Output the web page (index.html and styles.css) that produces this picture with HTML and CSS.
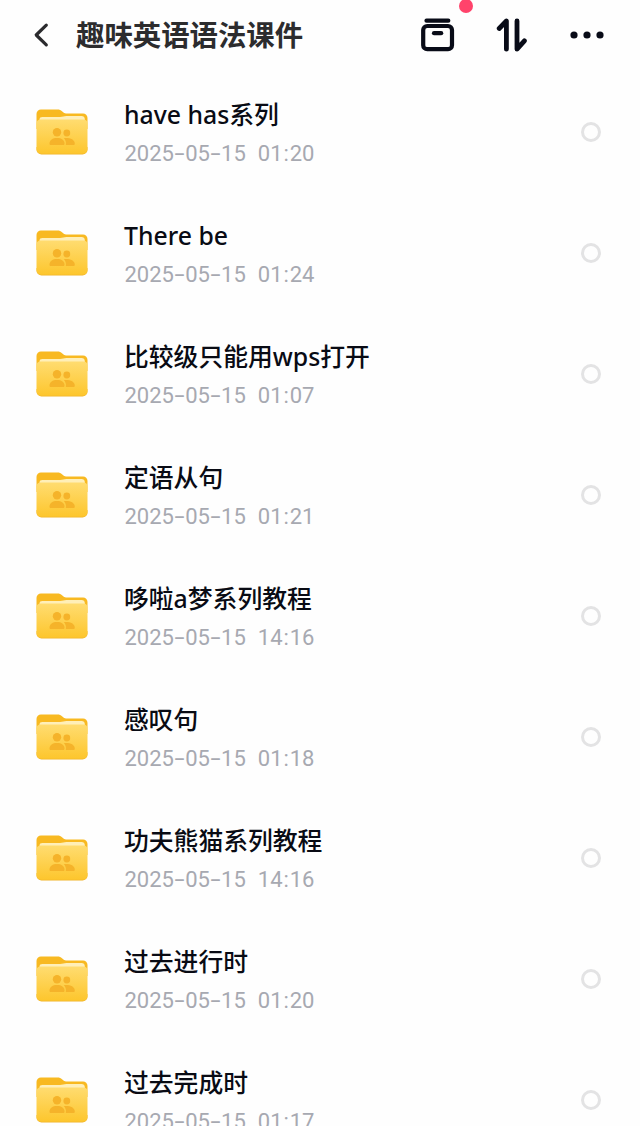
FILE: index.html
```html
<!DOCTYPE html>
<html lang="zh-CN">
<head>
<meta charset="utf-8">
<title>趣味英语语法课件</title>
<link rel="stylesheet" href="styles.css">
</head>
<body>
<svg class="defs" aria-hidden="true">
  <defs>
    <linearGradient id="front" x1="0" y1="0" x2="0" y2="1">
      <stop offset="0" stop-color="#ffdc70"/>
      <stop offset="1" stop-color="#fdc62d"/>
    </linearGradient>
    <symbol id="folder" viewBox="0 0 52 46">
      <path fill="#f8b921" d="M.5 5A4.500 4.500 0 0 1 5 .5h16.500c2 0 3.200.6 4.500 1.800l1.500 1.200c1 .8 2 1 3.500 1h16a4.500 4.500 0 0 1 4.500 4.500V20H.5z"/>
      <path fill="#ffefb8" d="M3.500 14V10.500C3.500 8.800 4.500 8 6.500 8H24c1.400 0 2.300-.2 3.300-.5.900-.3 1.800-.5 3.200-.5h15c2 0 3.300 1.200 3.300 3V14z"/>
      <path fill="#f0b32b" d="M.5 38h51v2.500a5 5 0 0 1-5 5h-41a5 5 0 0 1-5-5z"/>
      <path fill="url(#front)" d="M.5 14.500c0-2.500 1.700-4 4.300-4h42.400c2.600 0 4.300 1.500 4.300 4V40c0 3-2 4.700-5 4.700h-41c-3 0-5-1.700-5-4.700z"/>
      <g fill="#f5b32a">
        <circle cx="21" cy="23.200" r="4.200"/>
        <circle cx="30.800" cy="24" r="3.400"/>
        <path d="M13.500 34.700c0-3.800 3.200-5.700 7.500-5.700s7.500 1.900 7.500 5.700c0 .8-.5 1.300-1.300 1.300H14.800c-.8 0-1.300-.5-1.300-1.300z"/>
        <path d="M27.800 29.200c5-.8 11 .8 11 5.500 0 .8-.5 1.300-1.300 1.300h-7.700c.5-2.800-.2-5.200-2-6.800z"/>
      </g>
    </symbol>
  </defs>
</svg>

<header class="bar">
  <svg class="back" viewBox="0 0 16 26"><path d="M13.300 3.200 3.200 13l10.100 9.800"/></svg>
  <h1 class="heading">趣味英语语法课件</h1>
  <div class="actions">
    <div class="action">
      <svg class="glyph" viewBox="0 0 36 36"><path d="M6.500 3.700h21.800"/><rect x="3.200" y="9" width="28.800" height="23.200" rx="4"/><path d="M14 16.200h7.200"/></svg>
      <span class="badge"></span>
    </div>
    <svg class="glyph sort" viewBox="0 0 36 36"><path d="M4.200 11.500 11.400 4v28.200M22 4v28.200l7.400-8.400"/></svg>
    <svg class="glyph more" viewBox="0 0 36 36"><circle cx="5" cy="18" r="3.600"/><circle cx="18" cy="18" r="3.600"/><circle cx="31" cy="18" r="3.600"/></svg>
  </div>
</header>

<main class="list">
  <div class="row"><svg class="folder"><use href="#folder"/></svg><div class="info"><div class="name"><span class="latin">have has</span>系列</div><div class="date">2025<i class="dash">-</i>05<i class="dash">-</i>15 <span class="time">01<i class="colon">:</i>20</span></div></div><span class="pick"></span></div>
  <div class="row"><svg class="folder"><use href="#folder"/></svg><div class="info"><div class="name"><span class="latin">There be</span></div><div class="date">2025<i class="dash">-</i>05<i class="dash">-</i>15 <span class="time">01<i class="colon">:</i>24</span></div></div><span class="pick"></span></div>
  <div class="row"><svg class="folder"><use href="#folder"/></svg><div class="info"><div class="name">比较级只能用<span class="latin">wps</span>打开</div><div class="date">2025<i class="dash">-</i>05<i class="dash">-</i>15 <span class="time">01<i class="colon">:</i>07</span></div></div><span class="pick"></span></div>
  <div class="row"><svg class="folder"><use href="#folder"/></svg><div class="info"><div class="name">定语从句</div><div class="date">2025<i class="dash">-</i>05<i class="dash">-</i>15 <span class="time">01<i class="colon">:</i>21</span></div></div><span class="pick"></span></div>
  <div class="row"><svg class="folder"><use href="#folder"/></svg><div class="info"><div class="name">哆啦<span class="latin">a</span>梦系列教程</div><div class="date">2025<i class="dash">-</i>05<i class="dash">-</i>15 <span class="time">14<i class="colon">:</i>16</span></div></div><span class="pick"></span></div>
  <div class="row"><svg class="folder"><use href="#folder"/></svg><div class="info"><div class="name">感叹句</div><div class="date">2025<i class="dash">-</i>05<i class="dash">-</i>15 <span class="time">01<i class="colon">:</i>18</span></div></div><span class="pick"></span></div>
  <div class="row"><svg class="folder"><use href="#folder"/></svg><div class="info"><div class="name">功夫熊猫系列教程</div><div class="date">2025<i class="dash">-</i>05<i class="dash">-</i>15 <span class="time">14<i class="colon">:</i>16</span></div></div><span class="pick"></span></div>
  <div class="row"><svg class="folder"><use href="#folder"/></svg><div class="info"><div class="name">过去进行时</div><div class="date">2025<i class="dash">-</i>05<i class="dash">-</i>15 <span class="time">01<i class="colon">:</i>20</span></div></div><span class="pick"></span></div>
  <div class="row"><svg class="folder"><use href="#folder"/></svg><div class="info"><div class="name">过去完成时</div><div class="date">2025<i class="dash">-</i>05<i class="dash">-</i>15 <span class="time">01<i class="colon">:</i>17</span></div></div><span class="pick"></span></div>
</main>
</body>
</html>
```
FILE: styles.css
```css
* { box-sizing: border-box; }

body {
  margin: 0;
  height: 1126px;
  overflow: hidden;
  background: #fefefe;
  font-family: "Noto Sans CJK SC", sans-serif;
}

.defs { position: absolute; width: 0; height: 0; }

.bar {
  display: flex;
  align-items: center;
  height: 71px;
  padding: 0 35px 2px 33px;
}

.back {
  width: 16px;
  height: 26px;
  fill: none;
  stroke: #2b2b2e;
  stroke-width: 3.2;
  stroke-linecap: round;
  stroke-linejoin: round;
}

.heading {
  margin: 0 0 2px 27px;
  font-size: 28.4px;
  line-height: 40px;
  font-weight: 700;
  color: #2c2c2e;
  white-space: nowrap;
}

.actions { display: flex; gap: 38.5px; margin-left: auto; }
.action { position: relative; height: 36px; }

.glyph {
  display: block;
  width: 36px;
  height: 36px;
  fill: none;
  stroke: #080b17;
  stroke-width: 4.2;
  stroke-linecap: round;
  stroke-linejoin: round;
}

.sort { stroke-width: 4.8; }
.more { fill: #080b17; stroke: none; }

.badge {
  position: absolute;
  left: 39px;
  top: -18px;
  width: 14px;
  height: 14px;
  border-radius: 50%;
  background: #ff436b;
}

.row {
  display: flex;
  align-items: center;
  height: 121px;
  padding: 0 39px 0 36px;
}

.folder { flex: none; width: 52px; height: 46px; }
.info { flex: 1; margin-left: 36px; padding-top: 2px; }

.name {
  height: 39px;
  line-height: 38px;
  font-size: 24.8px;
  font-weight: 500;
  color: #090b14;
  white-space: nowrap;
}

.latin { font-family: "Noto Sans", sans-serif; }

.date {
  height: 38px;
  padding-left: 0.5px;
  line-height: 42px;
  font-family: Roboto, sans-serif;
  font-size: 22px;
  font-weight: 400;
  color: #a7a9b1;
  white-space: nowrap;
}

.dash, .colon { display: inline-block; font-style: normal; text-align: center; }
.dash { width: 11.2px; transform: scaleX(1.65); }
.colon { width: 7.2px; }
.time { margin-left: 6.5px; }

.pick {
  width: 20px;
  height: 20px;
  border: 3px solid #e3e3e4;
  border-radius: 50%;
}
```
